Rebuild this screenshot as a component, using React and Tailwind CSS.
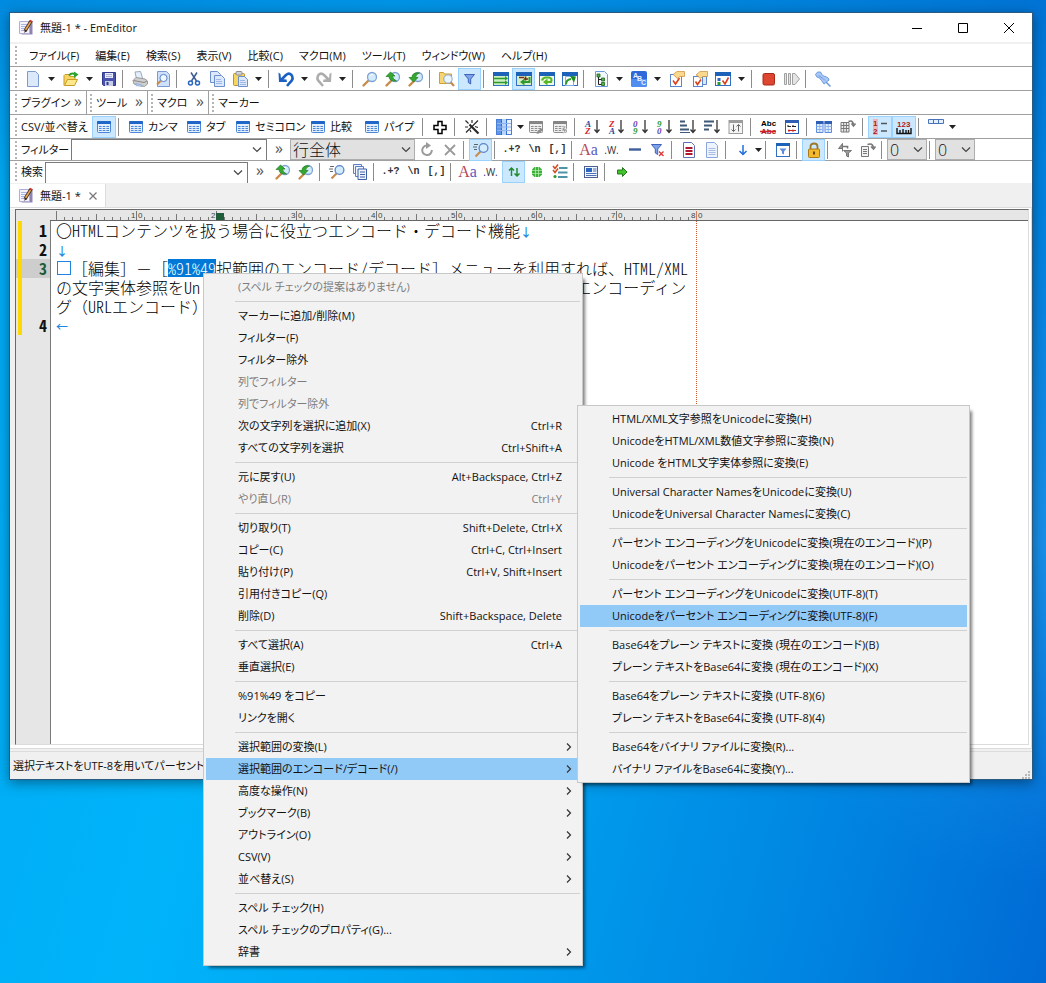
const MENUS = ['ファイル(F)', '編集(E)', '検索(S)', '表示(V)', '比較(C)', 'マクロ(M)', 'ツール(T)', 'ウィンドウ(W)', 'ヘルプ(H)'];

const CONTEXT_MENU = [
  { label: '(スペル チェックの提案はありません)', disabled: true },
  null,
  { label: 'マーカーに追加/削除(M)' },
  { label: 'フィルター(F)' },
  { label: 'フィルター除外' },
  { label: '列でフィルター', disabled: true },
  { label: '列でフィルター除外', disabled: true },
  { label: '次の文字列を選択に追加(X)', keys: 'Ctrl+R' },
  { label: 'すべての文字列を選択', keys: 'Ctrl+Shift+A' },
  null,
  { label: '元に戻す(U)', keys: 'Alt+Backspace, Ctrl+Z' },
  { label: 'やり直し(R)', keys: 'Ctrl+Y', disabled: true },
  null,
  { label: '切り取り(T)', keys: 'Shift+Delete, Ctrl+X' },
  { label: 'コピー(C)', keys: 'Ctrl+C, Ctrl+Insert' },
  { label: '貼り付け(P)', keys: 'Ctrl+V, Shift+Insert' },
  { label: '引用付きコピー(Q)' },
  { label: '削除(D)', keys: 'Shift+Backspace, Delete' },
  null,
  { label: 'すべて選択(A)', keys: 'Ctrl+A' },
  { label: '垂直選択(E)' },
  null,
  { label: '%91%49 をコピー' },
  { label: 'リンクを開く' },
  null,
  { label: '選択範囲の変換(L)', sub: true },
  { label: '選択範囲のエンコード/デコード(/)', sub: true, active: true },
  { label: '高度な操作(N)', sub: true },
  { label: 'ブックマーク(B)', sub: true },
  { label: 'アウトライン(O)', sub: true },
  { label: 'CSV(V)', sub: true },
  { label: '並べ替え(S)', sub: true },
  null,
  { label: 'スペル チェック(H)' },
  { label: 'スペル チェックのプロパティ(G)...' },
  { label: '辞書', sub: true },
];

const ENCODE_MENU = [
  { label: 'HTML/XML文字参照をUnicodeに変換(H)' },
  { label: 'UnicodeをHTML/XML数値文字参照に変換(N)' },
  { label: 'Unicode をHTML文字実体参照に変換(E)' },
  null,
  { label: 'Universal Character NamesをUnicodeに変換(U)' },
  { label: 'UnicodeをUniversal Character Namesに変換(C)' },
  null,
  { label: 'パーセント エンコーディングをUnicodeに変換(現在のエンコード)(P)' },
  { label: 'Unicodeをパーセント エンコーディングに変換(現在のエンコード)(O)' },
  null,
  { label: 'パーセント エンコーディングをUnicodeに変換(UTF-8)(T)' },
  { label: 'Unicodeをパーセント エンコーディングに変換(UTF-8)(F)', active: true },
  null,
  { label: 'Base64をプレーン テキストに変換 (現在のエンコード)(B)' },
  { label: 'プレーン テキストをBase64に変換 (現在のエンコード)(X)' },
  null,
  { label: 'Base64をプレーン テキストに変換 (UTF-8)(6)' },
  { label: 'プレーン テキストをBase64に変換 (UTF-8)(4)' },
  null,
  { label: 'Base64をバイナリ ファイルに変換(R)...' },
  { label: 'バイナリ ファイルをBase64に変換(Y)...' },
];

/* ---------- icons ---------- */

const Doc = ({ x = 0, y = 0 }) => (
  <path d={`M${x + 0.5} ${y + 0.5}h7l3 3v8h-10z`} fill="#dbe9fb" stroke="#6d8fd0" />
);

const Lens = ({ cx = 10, cy = 6, r = 4.5 }) => (
  <g>
    <path d={`M${cx - r + 1} ${cy + r - 1}L1.5 14.5`} stroke="#c98b4b" strokeWidth="2.4" strokeLinecap="round" />
    <circle cx={cx} cy={cy} r={r} fill="#d3ecfb" stroke="#7fa3d4" strokeWidth="1.3" />
    <path d={`M${cx - 2} ${cy - 1}q1-2 3-1.6`} stroke="#fff" fill="none" />
  </g>
);

const WindowFrame = ({ children }) => (
  <g>
    <rect x="0.5" y="1.5" width="15" height="13" fill="#fff" stroke="#2f6fc4" />
    <rect x="0" y="1" width="16" height="4" fill="#1c62b9" />
    {children}
  </g>
);

const Table = ({ head = '#1f66c8', line = '#4b86d8', fill = '#e4effc' }) => (
  <g>
    <rect x="1.5" y="2.5" width="13" height="11" rx="1" fill={fill} stroke={line} />
    <rect x="1" y="2" width="14" height="3" rx="1" fill={head} />
    <path d="M3 7.5h2.6M6.7 7.5h2.6M10.4 7.5h2.6M3 9.5h2.6M6.7 9.5h2.6M10.4 9.5h2.6M3 11.5h2.6M6.7 11.5h2.6M10.4 11.5h2.6" stroke={line} />
  </g>
);

const DownArrow = ({ x = 13, color = '#333' }) => (
  <path d={`M${x} 1v12M${x - 2.5} 10.5L${x} 13.5l2.5-3`} fill="none" stroke={color} strokeWidth="1.3" />
);

const Letters = ({ top, bottom, topColor, bottomColor }) => (
  <g fontFamily="Liberation Serif, serif" fontSize="9" fontWeight="bold" fontStyle="italic">
    <text x="1" y="8" fill={topColor}>{top}</text>
    <text x="1" y="15" fill={bottomColor}>{bottom}</text>
    <DownArrow />
  </g>
);

const ICONS = {
  app: (
    <g>
      <path d="M3.5 1.5h11v13h-11z" fill="#8d86b4" />
      <path d="M1.5 1.5h10v12h-10z" fill="#f4f2fb" stroke="#b3aed0" />
      <path d="M3 4.500h6M3 6.500h5M3 8.500h4M3 10.500h3" stroke="#a9b6e0" />
      <path d="M13 1L7 11" stroke="#3b2a20" strokeWidth="3.4" />
      <path d="M12.500 2L7.200 10.500" stroke="#e8a24e" strokeWidth="1.600" />
      <path d="M7.500 9.500l-1.600 3.500 3-2z" fill="#222" />
      <path d="M11.800 0.500l2.600 1.500" stroke="#c23b2c" strokeWidth="1.600" />
    </g>
  ),
  new: <path d="M2.500 0.500h8l3 3v12h-11z" fill="#dbe9fb" stroke="#7a9ad4" />,
  open: (
    <g>
      <path d="M1 14.500V4.500l1-1h4l1 2h5v3" fill="#f6d560" stroke="#c89b2a" />
      <path d="M1.500 14.500l3-6h10l-3 6z" fill="#ffe88a" stroke="#c89b2a" />
      <path d="M6 4.500q2-3 6-1.500" fill="none" stroke="#2da12d" strokeWidth="2" />
      <path d="M11 0.500l4.500 3-4.500 3.500z" fill="#2da12d" />
    </g>
  ),
  save: (
    <g>
      <path d="M1.500 1.500h13v13h-12l-1-1z" fill="#4a54ad" stroke="#303a8c" />
      <path d="M4 2h8v5H4z" fill="#e8ebf8" />
      <path d="M5 3.500h6M5 5.500h6" stroke="#a6aed8" />
      <path d="M4 10h8v5H4z" fill="#c9cee8" />
      <path d="M5.500 11h2v3h-2z" fill="#303a8c" />
    </g>
  ),
  print: (
    <g>
      <path d="M4.500 8L3 1l5.500-.5L10.500 7" fill="#e6f0fc" stroke="#9ab" />
      <path d="M1 9.500l3-3 9 1.500 2.500 2v3l-3 2.500L2 13z" fill="#cfcfcf" stroke="#9a9a9a" />
      <path d="M1.500 9.500l10.500 2 3-1.500" fill="none" stroke="#888" />
      <path d="M4 12.500l6 1.500v1.500l-6-1z" fill="#bcd6f5" stroke="#7a98c8" strokeWidth="0.600" />
    </g>
  ),
  preview: (
    <g>
      <path d="M2.500 0.500h9l3 3v12h-12z" fill="#cfe1fa" stroke="#7a9ad4" />
      <path d="M6 9.500l-4 4" stroke="#c98b4b" strokeWidth="2" />
      <circle cx="8.500" cy="7" r="3.600" fill="#eff8ff" stroke="#5b82c8" />
    </g>
  ),
  cut: (
    <g fill="none" stroke="#2b66c0" strokeWidth="1.500">
      <path d="M5 1.500l5.500 8.500M11 1.500l-5.500 8.500" stroke="#3e5c94" />
      <circle cx="4.500" cy="12" r="2" />
      <circle cx="11.500" cy="12" r="2" />
    </g>
  ),
  copy: (
    <g>
      <Doc x={1} y={0} />
      <Doc x={5} y={4} />
      <path d="M7 8.500h5M7 10.500h6M7 12.500h6" stroke="#9db6e6" />
    </g>
  ),
  paste: (
    <g>
      <rect x="1.500" y="2.500" width="11" height="12" rx="1" fill="#f8d55c" stroke="#c09030" />
      <rect x="4" y="0.500" width="6" height="3.500" rx="1" fill="#cfd3dc" stroke="#8b8f9a" />
      <path d="M6.500 5.500h6l3 3v7h-9z" fill="#dbe9fb" stroke="#6d8fd0" />
      <path d="M8 9.500h5M8 11.500h6M8 13.500h6" stroke="#9db6e6" />
    </g>
  ),
  undo: (
    <g fill="none" stroke="#1a5fc4" strokeWidth="2.600">
      <path d="M3.500 8.500L8 4q3-2.600 5.500 0 2.600 3.500-1 7l-3.500 4" />
      <path d="M0.500 1.500l2 1.500.5 5 5.500.5.5 2.500H1z" fill="#1a5fc4" stroke="none" />
    </g>
  ),
  redo: (
    <g fill="none" stroke="#adadad" strokeWidth="2.600">
      <path d="M12.500 8.500L8 4Q5 1.400 2.500 4q-2.600 3.500 1 7L7 15" />
      <path d="M15.500 1.500l-2 1.500-.5 5-5.500.5-.5 2.500H15z" fill="#adadad" stroke="none" />
    </g>
  ),
  find: <Lens />,
  findPrev: (
    <g>
      <Lens />
      <path d="M1 5.500L5.500 1 10 5H7.500q0 3 4 5-7.500.5-7.500-4.500z" fill="#35a832" stroke="#1d7a1d" strokeWidth="0.700" />
    </g>
  ),
  findNext: (
    <g>
      <Lens />
      <path d="M1 6.500l4.500 4.500L10 6.500H7.500q0-3 4-4.500-7.500-1-7.500 4.500z" fill="#35a832" stroke="#1d7a1d" strokeWidth="0.700" />
    </g>
  ),
  findFiles: (
    <g>
      <path d="M0.500 12.500v-11h4l1 1.500h7v9.500z" fill="#f7d676" stroke="#cf9e35" />
      <path d="M11.500 11l3.500 4" stroke="#c98b4b" strokeWidth="2.200" />
      <circle cx="9" cy="8" r="4.200" fill="#eaf6ff" stroke="#8aa6cc" />
    </g>
  ),
  filter: <path d="M2.500 3.500h10l-3.800 4.500v5l-2.400-1.500v-3.500z" fill="#7fa2ea" stroke="#3d63bb" />,
  wrapNone: (
    <g>
      <WindowFrame />
      <path d="M1 5h14v9H1z" fill="#cdeec2" />
      <path d="M1 7.500h12M1 11.500h12" stroke="#2c9a2c" strokeWidth="1.600" />
      <path d="M12 5l3 2.500-3 2zM12 9.500l3 2-3 2.500z" fill="#2c9a2c" />
    </g>
  ),
  wrapChars: (
    <WindowFrame>
      <path d="M1 5h14v9H1z" fill="#d7efc9" />
      <path d="M3 6.500h5M9.500 5.500v4M8 8h4" stroke="#7a2a10" strokeWidth="1.600" />
      <path d="M13.500 6v5H8" fill="none" stroke="#2c9a2c" strokeWidth="2" />
      <path d="M8.500 7.500v7L4 11z" fill="#2c9a2c" />
    </WindowFrame>
  ),
  wrapWindow: (
    <WindowFrame>
      <path d="M1 5h14v9H1z" fill="#eefae8" />
      <path d="M3 9.500q1-3 4-3h3q3.500.5 2 4.500H8" fill="none" stroke="#57b626" strokeWidth="2.200" />
      <path d="M8.500 7.500v7L4 11z" fill="#57b626" />
    </WindowFrame>
  ),
  wrapPage: (
    <WindowFrame>
      <path d="M3.500 5.500h8v9h-8z" fill="#fff" stroke="#7fb0ea" />
      <path d="M4 13.500q0-5 5-5.500" fill="none" stroke="#2c9a2c" strokeWidth="2" />
      <path d="M8 5l6 0.500-2 6z" fill="#1d8a1d" />
    </WindowFrame>
  ),
  outline: (
    <g>
      <path d="M2.500 0.500h9l3 3v12h-12z" fill="#f3f8ff" stroke="#6f9ad8" />
      <path d="M5.500 5v8.500h4M5.500 8.500h4" fill="none" stroke="#222" />
      <path d="M4 3h3v3H4zM8.500 7h3v3h-3zM8.500 11.500h3v3h-3z" fill="#52b543" stroke="#1f5f1c" strokeWidth="0.800" />
    </g>
  ),
  spell: (
    <g>
      <rect x="0" y="0" width="16" height="16" rx="2" fill="#2f68d8" />
      <path d="M0 8h16v6q0 2-2 2H2q-2 0-2-2z" fill="#4f8df0" />
      <g fontFamily="Liberation Sans, sans-serif" fontSize="7" fontWeight="bold" fill="#e8f1ff">
        <text x="2" y="7">A</text>
        <text x="6" y="10">B</text>
        <text x="10" y="14">C</text>
      </g>
    </g>
  ),
  props: (
    <g>
      <rect x="1.500" y="3.500" width="11" height="12" fill="#fff" stroke="#5b86cf" />
      <path d="M4 9.500l2.500 3.500 4-6" fill="none" stroke="#d9411e" strokeWidth="1.600" />
      <path d="M4 3.500L8 0.500h7.500v5H11L8 7.500 6 5z" fill="#fbd98c" stroke="#c98b3a" strokeWidth="0.700" />
    </g>
  ),
  propsAll: (
    <g>
      <path d="M4.500 5.500h10v8h-10z" fill="#dfe8f8" stroke="#5b86cf" />
      <rect x="1.500" y="5.500" width="9" height="10" fill="#fff" stroke="#5b86cf" />
      <path d="M3.500 10.500l2 3 3.500-5" fill="none" stroke="#d9411e" strokeWidth="1.600" />
      <path d="M4 4l4-3.500h7.500v5H11L8 7.500 6 5z" fill="#fbd98c" stroke="#c98b3a" strokeWidth="0.700" />
    </g>
  ),
  customize: (
    <WindowFrame>
      <path d="M2.500 7h3v3h-3z" fill="#2b66c0" />
      <path d="M2.500 11h3v3h-3z" fill="#2c9a2c" />
      <path d="M7.500 9.500l2.500 3.500 3.500-6.500" fill="none" stroke="#d9411e" strokeWidth="1.600" />
    </WindowFrame>
  ),
  record: <rect x="2" y="2.500" width="11.500" height="11.500" rx="1.500" fill="#dd4630" stroke="#a92a18" />,
  play: (
    <g fill="#e4e4e4" stroke="#a0a0a0">
      <path d="M0.500 2.500h2v11h-2zM4.500 2.500h2v11h-2zM8.500 2.500l2.500 0 4.500 5.500-4.500 5.500h-2.500z" />
    </g>
  ),
  pin: (
    <g>
      <path d="M9.500 9.500l6 6" stroke="#6d9ae0" strokeWidth="1.500" />
      <path d="M0.500 3.500q1.500-3.500 5-2.500l2 3.500 4 1.500q2.500 1 2.500 3l-5 4-2.500-3.500L4.500 7Q1 6.500.5 3.500z" fill="#a9c8f6" stroke="#6d9ae0" />
      <path d="M3.500 4.500l4.500 3 2 2" stroke="#6d9ae0" fill="none" />
    </g>
  ),
  csv: <Table />,
  plus: <path d="M6 2.500h4v4h4v4h-4v4H6v-4H2v-4h4z" fill="#fff" stroke="#000" strokeWidth="1.500" />,
  wand: (
    <g stroke="#2a2a2a" fill="none">
      <path d="M5.500 5.500l9 9" strokeWidth="2.200" />
      <path d="M14 1.500L2 13.500M1.500 1.500l3 3M8 1v3M1 8h3M11 7.500l3 1M6 11l1 2" strokeWidth="1.200" />
    </g>
  ),
  columns: (
    <g>
      <rect x="0.500" y="0.500" width="15" height="15" fill="#e8f0fd" stroke="#4a7fd6" />
      <rect x="1" y="1" width="5" height="14" fill="#5f96e8" />
      <rect x="6" y="0" width="4" height="16" fill="#b9d4fa" />
      <path d="M5.500 0v16M10.500 0v16" stroke="#2f6fd6" />
      <path d="M1 4.500h14M1 8h14M1 11.500h14" stroke="#8fb3ee" />
    </g>
  ),
  tableEdit: (
    <g>
      <Table head="#858585" line="#8d8d8d" fill="#efefef" />
      <path d="M8 14l5-5 2 2-5 4z" fill="#8d8d8d" />
    </g>
  ),
  tableBolt: (
    <g>
      <Table head="#858585" line="#8d8d8d" fill="#efefef" />
      <path d="M12 7l-2.500 5H12l-1 4 4-6h-2.500l1.500-3z" fill="#9a9a9a" stroke="#fff" strokeWidth="0.500" />
    </g>
  ),
  az: <Letters top="A" bottom="Z" topColor="#1f4a9e" bottomColor="#d2232a" />,
  za: <Letters top="Z" bottom="A" topColor="#d2232a" bottomColor="#1f4a9e" />,
  n09: <Letters top="0" bottom="9" topColor="#6a3fb0" bottomColor="#2c9a2c" />,
  n90: <Letters top="9" bottom="0" topColor="#2c9a2c" bottomColor="#6a3fb0" />,
  lenUp: (
    <g>
      <path d="M0 2.500h5M0 6.500h7M0 10.500h9" stroke="#3e5878" strokeWidth="2" />
      <path d="M0 13.500h10" stroke="#3e5878" />
      <DownArrow />
    </g>
  ),
  lenDown: (
    <g>
      <path d="M0 2.500h10M0 6.500h8M0 10.500h5" stroke="#3e5878" strokeWidth="2" />
      <DownArrow />
    </g>
  ),
  sortCols: (
    <g>
      <rect x="1" y="1.500" width="13.500" height="13" fill="#f5f5f5" stroke="#9c9c9c" />
      <path d="M1 3h13.500" stroke="#9c9c9c" strokeWidth="2" />
      <path d="M5.500 5.500v7M3.500 10.500l2 2 2-2M10.500 12.500v-7M8.500 7.500l2-2 2 2" fill="none" stroke="#666" />
    </g>
  ),
  abc: (
    <g fontFamily="Liberation Sans, sans-serif" fontSize="8" fontWeight="bold">
      <text x="1" y="7" fill="#000">Abc</text>
      <text x="1" y="15" fill="#b01818">Abc</text>
      <path d="M0 12.500h16" stroke="#d2232a" strokeWidth="1.500" />
    </g>
  ),
  abcWindow: (
    <g>
      <rect x="1.500" y="1.500" width="13" height="13" fill="#fff" stroke="#2f5fb4" />
      <path d="M1 3h14" stroke="#2f5fb4" strokeWidth="2" />
      <path d="M4 7.500h3M8 7.500h4M4 6v2M9 6v2" stroke="#222" />
      <path d="M4 11.500h8M5 10.500v2.500M9 10.500v2.500" stroke="#c22" />
    </g>
  ),
  split: (
    <g>
      <path d="M0.500 2.500h6.500v11H0.500zM9 2.500h6.500v11H9z" fill="#e4effc" stroke="#5b8be0" />
      <path d="M0 3.500h7.500M8.500 3.500H16" stroke="#2f5fb4" strokeWidth="3" />
      <path d="M0.500 7.500H7M0.500 10.500H7M3.800 5v8M9 7.500h6.500M9 10.500h6.500M12.200 5v8" stroke="#8fb3ee" />
    </g>
  ),
  join: (
    <g fill="none" stroke="#777">
      <path d="M1 3.500h8v9.500H1zM1 6.500h8M1 9.500h8M3.700 3.500v9.500M6.400 3.500v9.500" fill="#eee" />
      <path d="M8.500 2.500q4-2 5 3M11.500 4.500l2 2.500 2-2.500" strokeWidth="1.600" />
    </g>
  ),
  lineNo: (
    <g>
      <rect x="1" y="0" width="5" height="16" fill="#f2b5b5" />
      <g fontFamily="Liberation Sans, sans-serif" fontSize="8" fontWeight="bold" fill="#a32222">
        <text x="1" y="7">1</text>
        <text x="1" y="15">2</text>
      </g>
      <path d="M9 4.500h6M9 12h6" stroke="#555" strokeWidth="1.600" />
    </g>
  ),
  ruler: (
    <g>
      <text x="1" y="8" fontFamily="Liberation Sans, sans-serif" fontSize="8" fontWeight="bold" fill="#b02020">123</text>
      <path d="M1 9v5.500h14V9M4 11v3M7 10v4M10 11v3M12.500 11v3" fill="none" stroke="#111" strokeWidth="1.400" />
    </g>
  ),
  heading: <path d="M0.500 0.500h15v4H0.500zM5.500 0.500v4M10.500 0.500v4" fill="#e4effc" stroke="#4a72b8" />,
  refresh: (
    <g fill="none" stroke="#9a9a9a" strokeWidth="2">
      <path d="M12.800 8a4.800 4.800 0 1 1-5-4.500" />
      <path d="M7 0l5 3.500-5 3.500z" fill="#9a9a9a" stroke="none" />
    </g>
  ),
  cross: <path d="M3 3l10 10M13 3L3 13" stroke="#9a9a9a" strokeWidth="1.800" />,
  quickFind: (
    <g>
      <path d="M1 2.500h4M0 5h4M1 7.500h3" stroke="#555" strokeWidth="0.900" />
      <path d="M7.500 9.500l-5 5" stroke="#c98b4b" strokeWidth="2.200" />
      <circle cx="10.500" cy="6" r="4.400" fill="#d3ecfb" stroke="#5c83c8" strokeWidth="1.300" />
    </g>
  ),
  minus: <path d="M2 7.500h12" stroke="#3f5f9c" strokeWidth="2.400" />,
  filterX: (
    <g>
      <path d="M1.500 2.500h10l-3.800 4.500v5.500l-2.400-1.500V7z" fill="#7fa2ea" stroke="#3d63bb" />
      <path d="M9 9.500l4.500 4.500M13.500 9.500L9 14" stroke="#d33" strokeWidth="1.300" />
    </g>
  ),
  docRed: (
    <g>
      <path d="M2.500 0.500h8l3 3v12h-11z" fill="#fff" stroke="#5b72b8" />
      <path d="M4.500 6h7M4.500 9h7M4.500 12h7" stroke="#b01830" strokeWidth="2" />
    </g>
  ),
  docGray: (
    <g>
      <path d="M2.500 0.500h8l3 3v12h-11z" fill="#eef4fd" stroke="#8aa6dc" />
      <path d="M4.500 6.500h7M4.500 8.500h7M4.500 10.500h7M4.500 12.500h7" stroke="#a9bce0" />
    </g>
  ),
  arrowDown: <path d="M8 3v9.500M4.500 9L8 12.500 11.500 9" fill="none" stroke="#1f6fe0" strokeWidth="1.500" />,
  filterWindow: (
    <g>
      <rect x="1.500" y="1.500" width="13" height="13" fill="#fff" stroke="#2f6fc4" />
      <path d="M1 2.500h14" stroke="#1c62b9" strokeWidth="3" />
      <path d="M4.500 6.500h7L9 9.500v3l-2-1v-2z" fill="#5b8be0" />
    </g>
  ),
  lock: (
    <g>
      <path d="M4.500 8V4.500q0-3 3.500-3t3.500 3V8" fill="none" stroke="#9a7a2a" strokeWidth="1.800" />
      <rect x="2.500" y="7" width="11" height="8.500" rx="1" fill="#f5b92e" stroke="#a87812" />
      <path d="M8 9.500v3" stroke="#5a3d00" strokeWidth="1.800" />
    </g>
  ),
  flagFilter: (
    <g fill="#999" stroke="#777">
      <path d="M5.500 1.500l-4 5h4zM5.500 1.500v8" />
      <path d="M5.500 4.500h5v2" fill="none" strokeWidth="1.600" />
      <path d="M6.500 8.500h8L11.500 11v4l-2-1v-3z" />
    </g>
  ),
  docRotate: (
    <g fill="none" stroke="#777">
      <path d="M1.500 4.500h7v10h-7zM3 7.500h4M3 9.500h4M3 11.500h4" fill="#f2f2f2" />
      <path d="M7.500 2.500q5-2 6 3M11 4.500l2.500 2.500 2-2.500" strokeWidth="1.600" />
    </g>
  ),
  pages: (
    <g>
      <path d="M1.500 0.500h8v9h-8z" fill="#eef4fd" stroke="#5b7ec4" />
      <path d="M3.500 2.500h8v10h-8z" fill="#eef4fd" stroke="#5b7ec4" />
      <path d="M6 5h8.500v10.500H6z" fill="#eef4fd" stroke="#3e5fa8" />
      <path d="M8 8h5M8 10.500h5M8 13h5" stroke="#3e5fa8" />
    </g>
  ),
  upDown: (
    <path d="M5.500 12V4M3 6.500l2.500-2.500L8 6.500M11 4v8M8.500 9.500L11 12l2.500-2.500" fill="none" stroke="#1f8a2e" strokeWidth="1.500" />
  ),
  globe: (
    <g>
      <path d="M5.500 3h5l2.500 2.500v5L10.500 13h-5L3 10.500v-5z" fill="#3cae3a" />
      <path d="M3 6.500h10M3 9.500h10M6.500 3v10M9.500 3v10" stroke="#bdf0b4" strokeWidth="0.700" />
    </g>
  ),
  checks: (
    <g>
      <path d="M1 2l2 2.500L6 0.500M1 6l2 2.500L6 4.500" fill="none" stroke="#d4491c" strokeWidth="1.500" />
      <circle cx="3" cy="12.500" r="1.600" fill="#2c9a2c" />
      <path d="M7 4h8.500M6 8.500h9.500M6 13h9.500" stroke="#4e93a8" strokeWidth="2" />
    </g>
  ),
  panel: (
    <g>
      <rect x="1.500" y="2.500" width="13" height="11" fill="#f2f6fd" stroke="#4a5f94" />
      <path d="M3 4h6v4H3z" fill="#2b66c0" />
      <path d="M10 5h3.500M10 7h3.500M3 9.500h10.500M3 11.500h10.500" stroke="#4a6fb4" />
    </g>
  ),
  go: <path d="M3.500 6h5V3.500l4.500 4.500-4.500 4.500V10h-5z" fill="#45c22e" stroke="#1f7d16" />,
};

function Icon({ name }) {
  return (
    <svg viewBox="0 0 16 16" className="h-4 w-4 shrink-0 overflow-visible" aria-hidden="true">
      {ICONS[name]}
    </svg>
  );
}

const Chevron = () => (
  <svg viewBox="0 0 10 6" className="h-1.5 w-2.5" fill="none" stroke="#444" strokeWidth="1.2" aria-hidden="true">
    <path d="M1 0.500l4 4 4-4" />
  </svg>
);

/* ---------- toolbar pieces ---------- */

function Bar({ className = '', children }) {
  return (
    <div role="toolbar" className={`flex items-center border-b border-[#a0a0a0] pl-[5px] ${className}`}>
      {children}
    </div>
  );
}

const Grip = () => <span className="h-[18px] w-0 shrink-0 border-l-2 border-dotted border-[#b4b4b4]" />;

const Sep = () => <span className="mr-[5px] ml-0.5 h-[18px] w-px shrink-0 bg-[#8c8c8c]" />;

const Caret = ({ className = 'w-[15px]' }) => (
  <button type="button" aria-label="メニューを開く" className={`flex shrink-0 justify-center ${className}`}>
    <svg viewBox="0 0 7 4" className="h-1 w-[7px]" aria-hidden="true">
      <path d="M0 0h7L3.500 4z" fill="#222" />
    </svg>
  </button>
);

const pressedStyle = 'bg-[#cce8ff] outline -outline-offset-1 outline-[#99d1ff]';

const Tool = ({ name, pressed, wide }) => (
  <button
    type="button"
    aria-label={name}
    aria-pressed={!!pressed}
    className={`flex h-[22px] shrink-0 items-center justify-center ${wide ? 'w-6' : 'w-[23px]'} ${pressed ? pressedStyle : ''}`}
  >
    <Icon name={name} />
  </button>
);

// "|" draws a separator, "v" a drop-down caret, a leading "*" marks a pressed button
function Tools({ items, wide, caret }) {
  return items.split(' ').map((item, i) => {
    if (item === '|') return <Sep key={i} />;
    if (item === 'v') return <Caret key={i} className={caret} />;
    return <Tool key={i} name={item.replace('*', '')} pressed={item[0] === '*'} wide={wide} />;
  });
}

const More = () => (
  <button type="button" aria-label="その他" className="w-4 pb-1 text-center text-base leading-4 text-[#555]">»</button>
);

const TextTool = ({ children }) => (
  <button
    type="button"
    className="w-[23px] shrink-0 text-center text-[10px] leading-4 font-bold text-[#333] [font-family:'Liberation_Mono',monospace]"
  >
    {children}
  </button>
);

const MatchTools = () => (
  <>
    <TextTool>.+?</TextTool>
    <TextTool>\n</TextTool>
    <TextTool>[,]</TextTool>
    <Sep />
    <button type="button" className="w-[23px] shrink-0 text-base leading-4 text-[#b5475a] [font-family:'Liberation_Serif',serif]">
      A<span className="text-[#5a5ac0]">a</span>
    </button>
    <button type="button" className="w-[23px] shrink-0 text-[10px] leading-4 text-[#1f2a8a]">
      .<span className="text-[#333]">W</span>.
    </button>
  </>
);

function Combo({ id, label, className }) {
  return (
    <div className={`flex shrink-0 items-center gap-0.5 pl-1 ${className}`}>
      <label htmlFor={id} className="shrink-0 whitespace-nowrap">{label}</label>
      <div className="flex h-[21px] min-w-0 flex-1 items-center border-x border-t border-[#7a7a7a] bg-white pr-1">
        <input id={id} type="text" className="min-w-0 flex-1 bg-transparent px-1 outline-none" />
        <button type="button" aria-label={`${label}の履歴`}><Chevron /></button>
      </div>
    </div>
  );
}

function Select({ label, value, className }) {
  return (
    <div className={`relative h-[21px] shrink-0 ${className}`}>
      <select
        aria-label={label}
        defaultValue={value}
        className="h-full w-full appearance-none border border-[#adadad] bg-[#e1e1e1] pl-0.5 text-base leading-4 font-light"
      >
        <option>{value}</option>
      </select>
      <span className="pointer-events-none absolute top-2 right-1"><Chevron /></span>
    </div>
  );
}

/* ---------- editor ---------- */

function Ruler() {
  const ticks = Array.from({ length: 81 }, (_, i) => i);
  return (
    <svg className="block h-[11px] w-full bg-[#e6e6e6]" aria-hidden="true">
      {ticks.map((i) => {
        const top = i % 10 === 0 ? 1 : i % 5 === 0 ? 4 : 7;
        return <path key={i} d={`M${i * 8 + 40.5} ${top}V10`} stroke={i === 80 ? '#d08060' : '#777'} />;
      })}
      <g fontSize="8" fill="#444" fontFamily="Liberation Sans, sans-serif">
        {[1, 2, 3, 4, 5, 6, 7, 8].map((n) => (
          <g key={n}>
            <text x={n * 80 + 35} y="8">{n}</text>
            <text x={n * 80 + 42} y="8">0</text>
          </g>
        ))}
      </g>
      <rect x="200" y="3" width="8" height="7" fill="#1e5c3a" />
      <path d="M34 10.500h2000" stroke="#666" />
    </svg>
  );
}

const Gutter = () => (
  <ol className="w-[35px] shrink-0 border-r border-[#7a7a7a] bg-[#e6e6e6] font-bold">
    {['1', '2', '3', '', '', '4'].map((n, i) => (
      <li key={i} className={`flex h-[19px] justify-between pr-[3px] pl-0.5 ${n === '3' ? 'bg-[#cdcdcd] text-[#1e5c3a]' : ''}`}>
        <span className="w-1 bg-[#ffd800]" />
        {n}
      </li>
    ))}
  </ol>
);

const Mark = ({ children }) => <span className="text-xs font-medium text-[#1e86e0]">{children}</span>;

// keeps brackets and dashes at two columns while the Latin text around them takes one
const Wide = ({ children }) => (
  <span className="[font-feature-settings:normal] [text-spacing-trim:space-all]">{children}</span>
);

function Editor() {
  return (
    <div className="flex flex-1 border-t border-r border-b border-[#dcdcdc] bg-white pt-px pr-0.5 pb-[3px]">
      <div className="w-[5px] bg-[#f0f0f0]" />
      <div className="flex flex-1 flex-col border-t border-r border-b border-l border-[#dcdcdc] border-t-[#696969] border-l-[#696969]">
        <Ruler />
        <div className="flex flex-1 text-base leading-[19px] [font-family:'Noto_Sans_CJK_JP',sans-serif] [font-feature-settings:'hwid']">
          <Gutter />
          <div className="w-[646px] shrink-0 border-r border-dotted border-[#c8582c] pl-[5px] font-light whitespace-pre text-black">
            <p className="h-[19px]">〇HTMLコンテンツを扱う場合に役立つエンコード・デコード機能<Mark>↓</Mark></p>
            <p className="h-[19px]"><Mark>↓</Mark></p>
            <p className="flex h-[19px]">
              <span className="mx-px mt-0.5 h-3.5 w-3.5 shrink-0 border border-[#1e86e0]" />
              <Wide>［編集］－［</Wide>
              <span className="h-[18px] bg-[#0078d7] text-white">%91%49</span>
              択範囲のエンコード/デコード
              <Wide>］メニューを利用すれば、</Wide>
              HTML/XML
            </p>
            <p className="h-[19px]">の文字実体参照をUnicodeに変換したり、その逆変換、またはパーセントエンコーディン</p>
            <p className="h-[19px]">グ<Wide>（</Wide>URLエンコード<Wide>）</Wide></p>
            <p className="h-[19px]"><Mark>←</Mark></p>
          </div>
        </div>
      </div>
    </div>
  );
}

/* ---------- popup menus ---------- */

function PopupMenu({ label, items, className }) {
  return (
    <div
      role="menu"
      aria-label={label}
      className={`absolute border border-[#c8c8c8] bg-[#f2f2f2] p-0.5 shadow-[4px_4px_3px_-2px_rgba(0,0,0,0.5)] ${className}`}
    >
      {items.map((item, i) =>
        item ? (
          <button
            key={i}
            type="button"
            role="menuitem"
            disabled={item.disabled}
            className={`flex h-[22px] w-full items-center pr-[18px] pl-8 text-left whitespace-nowrap ${item.active ? 'bg-[#91c9f7]' : ''} ${item.disabled ? 'text-[#7d7d7d]' : ''}`}
          >
            <span className="flex-1">{item.label}</span>
            {item.keys}
            {item.sub && (
              <svg viewBox="0 0 6 10" className="-mr-2.5 h-2.5 w-1.5" fill="none" stroke="#333" strokeWidth="1.2" aria-hidden="true">
                <path d="M1 1.500L4.500 5 1 8.500" />
              </svg>
            )}
          </button>
        ) : (
          <hr key={i} className="my-[3px] ml-[29px] h-px border-0 bg-[#d0d0d0]" />
        )
      )}
    </div>
  );
}

/* ---------- page ---------- */

const PLUGIN_BARS = [
  { label: 'プラグイン', width: 'w-[70px]', more: true },
  { label: 'ツール', width: 'w-[56px]', more: true },
  { label: 'マクロ', width: 'w-[56px]', more: true },
  { label: 'マーカー', width: 'w-[56px]' },
];

const CSV_BUTTONS = [
  ['カンマ', 'w-[58px]'],
  ['タブ', 'w-[49px]'],
  ['セミコロン', 'w-[75px]'],
  ['比較', 'w-[54px]'],
  ['パイプ', 'w-[60px]'],
];

export default function App() {
  return (
    <div className="relative flex min-h-screen flex-col bg-[linear-gradient(to_bottom,rgba(0,70,180,0.3),transparent_18%),radial-gradient(ellipse_30%_35%_at_100%_55%,rgba(60,180,255,0.4),transparent),linear-gradient(105deg,#00a8f2_0%,#00b4fa_30%,#00a0ee_55%,#0086e2_80%,#006ad4_100%)] pt-3 pr-[13px] pb-[203px] pl-[9px] text-[11px] leading-4 text-[#111] [font-family:'Open_Sans','Noto_Sans_CJK_JP',sans-serif] [font-feature-settings:'palt']">
      <div className="flex flex-1 flex-col border border-[#2a5a80] bg-[#f0f0f0] shadow-[0_3px_12px_rgba(0,0,0,0.4)]">
        <header className="flex h-[31px] items-center border-b-2 border-[#f0f0f0] bg-white pl-2">
          <Icon name="app" />
          <h1 className="flex-1 pl-1.5">無題-1 * - EmEditor</h1>
          <button type="button" aria-label="最小化" className="flex w-[46px] justify-center">
            <svg viewBox="0 0 10 10" className="h-2.5 w-2.5" stroke="#000"><path d="M0 5.500h10" /></svg>
          </button>
          <button type="button" aria-label="最大化" className="flex w-[46px] justify-center">
            <svg viewBox="0 0 10 10" className="h-2.5 w-2.5" stroke="#000" fill="none"><path d="M0.500 0.500h9v9h-9z" /></svg>
          </button>
          <button type="button" aria-label="閉じる" className="flex w-[46px] justify-center">
            <svg viewBox="0 0 10 10" className="h-2.5 w-2.5" stroke="#000"><path d="M0 0l10 10M10 0L0 10" /></svg>
          </button>
        </header>

        <div className="bg-white">
          <Bar className="h-[23px]">
            <Grip />
            <nav className="flex gap-4 pt-0.5 pl-3">
              {MENUS.map((m) => (
                <button key={m} type="button" className="whitespace-nowrap">{m}</button>
              ))}
            </nav>
          </Bar>

          <Bar className="h-6">
            <Grip />
            <span className="w-1" />
            <Tools items="new v open v save | print preview | cut copy paste v | undo v redo v | find findPrev findNext | findFiles *filter | wrapNone *wrapChars wrapWindow wrapPage | outline v spell v props propsAll customize v | record play | pin" />
          </Bar>

          <Bar className="h-6">
            {PLUGIN_BARS.map((bar) => (
              <div key={bar.label} className="flex h-full items-center">
                <Grip />
                <div className={`mr-[3px] flex h-full items-center justify-between pl-1 ${bar.width} ${bar.more ? 'border-r border-[#a0a0a0]' : ''}`}>
                  <button type="button" className="whitespace-nowrap">{bar.label}</button>
                  {bar.more && <More />}
                </div>
              </div>
            ))}
          </Bar>

          <Bar className="h-6">
            <Grip />
            <span className="w-[75px] shrink-0 pl-1 whitespace-nowrap">CSV/並べ替え</span>
            <Tools items="*csv |" wide />
            {CSV_BUTTONS.map(([label, width]) => (
              <button key={label} type="button" className={`flex shrink-0 items-center gap-1 pl-1 whitespace-nowrap ${width}`}>
                <Icon name="csv" />
                {label}
              </button>
            ))}
            <Tools
              items="| plus | wand | columns v tableEdit tableBolt | az za n09 n90 lenUp lenDown sortCols | abc abcWindow | split join | *lineNo *ruler | heading v"
              wide
              caret="w-2"
            />
          </Bar>

          <Bar className="h-[22px]">
            <Grip />
            <Combo id="filter" label="フィルター" className="w-[250px]" />
            <span className="w-[23px] shrink-0 pl-1"><More /></span>
            <Select label="列" value="行全体" className="w-[125px]" />
            <Tools items="refresh cross | *quickFind |" />
            <MatchTools />
            <Tools items="minus filterX | docRed docGray | arrowDown v | filterWindow | *lock | flagFilter docRotate |" caret="w-[9px]" />
            <Select label="前の行" value="0" className="w-10" />
            <Sep />
            <Select label="後の行" value="0" className="w-10" />
          </Bar>

          <div role="toolbar" className="flex h-[22px] items-center pl-[5px]">
            <Grip />
            <Combo id="search" label="検索" className="w-[231px]" />
            <span className="w-[23px] shrink-0 pl-1"><More /></span>
            <Tools items="findPrev findNext | quickFind pages |" />
            <MatchTools />
            <Tools items="*upDown globe checks | panel | go" />
          </div>
        </div>

        <div className="flex h-6 pt-px">
          <div className="flex items-center border-r border-[#dcdcdc] bg-white pr-2 pl-2">
            <Icon name="app" />
            <span className="pr-2 pl-1.5">無題-1 *</span>
            <button type="button" aria-label="タブを閉じる">
              <svg viewBox="0 0 8 8" className="h-2 w-2" stroke="#777" strokeWidth="1.200"><path d="M0.500 0.500l7 7M7.500 0.500l-7 7" /></svg>
            </button>
          </div>
        </div>

        <Editor />

        <footer className="mt-0.5 flex h-7 items-center justify-between border-t border-[#dcdcdc] pl-[3px]">
          <span>選択テキストをUTF-8を用いてパーセント エンコーディングに変換します</span>
          <svg viewBox="0 0 8 8" className="mr-0.5 h-2 w-2 self-end" fill="#b8b8b8" aria-hidden="true">
            <path d="M6 0h2v2H6zM3 3h2v2H3zM6 3h2v2H6zM0 6h2v2H0zM3 6h2v2H3zM6 6h2v2H6z" />
          </svg>
        </footer>
      </div>

      <PopupMenu label="編集" items={CONTEXT_MENU} className="top-[273px] left-[203px] w-[380px]" />
      <PopupMenu label="エンコード/デコード" items={ENCODE_MENU} className="top-[405px] left-[577px] w-[393px]" />
    </div>
  );
}
